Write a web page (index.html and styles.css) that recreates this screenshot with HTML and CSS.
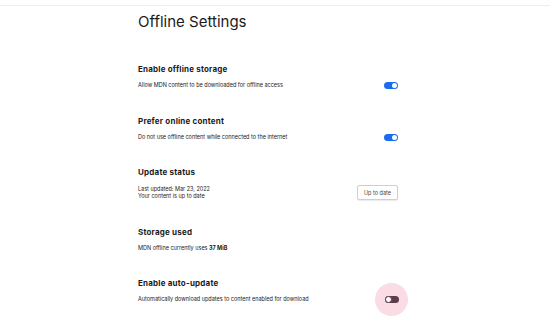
FILE: index.html
```html
<!DOCTYPE html>
<html lang="en">
  <head>
    <meta charset="UTF-8" />
    <meta name="viewport" content="width=device-width, initial-scale=1.0" />
    <title>Offline Settings</title>
    <link rel="stylesheet" href="styles.css">
  </head>
  <body>
    <div class="top-bar"></div>
    <div class="settings">
      <h1 class="settings-title">Offline Settings</h1>

      <section class="setting">
        <h2 class="setting-name">Enable offline storage</h2>
        <div class="setting-row">
          <p class="setting-desc">Allow MDN content to be downloaded for offline access</p>
          <span class="switch on"><span class="knob"></span></span>
        </div>
      </section>

      <section class="setting">
        <h2 class="setting-name">Prefer online content</h2>
        <div class="setting-row">
          <p class="setting-desc">Do not use offline content while connected to the internet</p>
          <span class="switch on"><span class="knob"></span></span>
        </div>
      </section>

      <section class="setting">
        <h2 class="setting-name">Update status</h2>
        <div class="setting-row">
          <p class="setting-desc">Last updated: Mar 23, 2022<br />Your content is up to date</p>
          <button class="status-btn">Up to date</button>
        </div>
      </section>

      <section class="setting">
        <h2 class="setting-name">Storage used</h2>
        <div class="setting-row">
          <p class="setting-desc">MDN offline currently uses <b>37 MiB</b></p>
        </div>
      </section>

      <section class="setting">
        <h2 class="setting-name">Enable auto-update</h2>
        <div class="setting-row">
          <p class="setting-desc">Automatically download updates to content enabled for download</p>
          <span class="switch-wrap">
            <span class="switch off"><span class="knob"></span></span>
          </span>
        </div>
      </section>
    </div>
  </body>
</html>
```

FILE: styles.css
```css
* {
  margin: 0;
  padding: 0;
  box-sizing: border-box;
}

body {
  font-family: Inter, "Noto Sans", sans-serif;
  background-color: #ffffff;
  color: #1b1b1b;
}

.top-bar {
  height: 6px;
  border-bottom: 1px solid #efefef;
}

.settings {
  width: 260px;
  margin-left: 138px;
}

.settings-title {
  font-size: 15px;
  font-weight: 400;
  line-height: 18px;
  margin-top: 7px;
  margin-bottom: 33px;
}

.setting {
  margin-bottom: 26.5px;
}

.setting-name {
  font-size: 8px;
  font-weight: 700;
  letter-spacing: 0.2px;
  line-height: 10px;
  margin-bottom: 8px;
}

.setting-row {
  display: flex;
  justify-content: space-between;
  align-items: center;
}

.setting-desc {
  font-size: 5.5px;
  line-height: 7px;
}

.switch {
  position: relative;
  display: inline-block;
  width: 14px;
  height: 7px;
  border-radius: 4px;
}

.switch.on {
  background-color: #1a6cf0;
}

.switch.off {
  background-color: #5b3d4e;
}

.knob {
  position: absolute;
  top: 1px;
  width: 5px;
  height: 5px;
  border-radius: 50%;
  background-color: #ffffff;
}

.switch.on .knob {
  right: 1px;
}

.switch.off .knob {
  left: 0;
  top: 0;
  width: 7px;
  height: 7px;
  border: 1px solid #5b3d4e;
}

.switch-wrap {
  display: flex;
  align-items: center;
  justify-content: center;
  width: 33px;
  height: 33px;
  margin-right: -10px;
  margin-top: -13px;
  margin-bottom: -13px;
  border-radius: 50%;
  background-color: #fbdbe4;
}

.status-btn {
  font-family: inherit;
  font-size: 5.5px;
  color: #444;
  width: 41px;
  height: 15px;
  background-color: #ffffff;
  border: 1px solid #cfcfcf;
  border-radius: 2px;
  box-shadow: 0 1px 1px rgba(0, 0, 0, 0.08);
}
```
